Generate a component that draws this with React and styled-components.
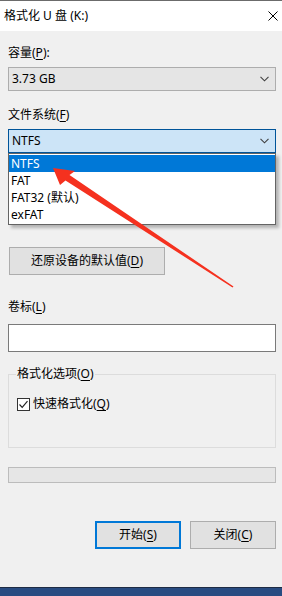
import React from "react";
import styled, { createGlobalStyle } from "styled-components";

const GlobalStyle = createGlobalStyle`
  html, body {
    margin: 0;
    padding: 0;
    background: #f0f0f0;
  }
  body {
    font-family: "Noto Sans", "Noto Sans CJK SC", sans-serif;
    font-size: 12px;
    color: #000;
  }
`;

const Window = styled.div`
  position: relative;
  width: 282px;
  height: 596px;
  display: flex;
  flex-direction: column;
  background: #f0f0f0;
  overflow: hidden;
`;

const TitleBar = styled.div`
  height: 30px;
  border-top: 1px solid #6b6b6b;
  background: #fff;
  display: flex;
  align-items: center;
  justify-content: space-between;
  padding: 0 4px 0 4px;
`;

const Title = styled.span`
  font-size: 12px;
  line-height: 16px;
`;

const CloseIcon = styled.svg`
  width: 10px;
  height: 10px;
`;

const Body = styled.div`
  flex: 1;
  display: flex;
  flex-direction: column;
  padding: 14px 6px 0 8px;
`;

const Label = styled.div`
  line-height: 16px;
  height: 16px;
  margin-top: ${({ $top }) => $top || 0}px;
  margin-bottom: ${({ $gap }) => $gap || 6}px;
`;

const Key = styled.u`
  text-underline-offset: 2px;
`;

const Field = styled.div`
  position: relative;
`;

const Combo = styled.div`
  height: 24px;
  box-sizing: border-box;
  border: 1px solid ${({ $open }) => ($open ? "#005499" : "#adadad")};
  background: ${({ $open }) => ($open ? "#cce4f7" : "#e5e5e5")};
  display: flex;
  align-items: center;
  justify-content: space-between;
  padding: 0 6px 0 3px;
  line-height: 16px;
`;

const Chevron = styled.svg`
  width: 9px;
  height: 6px;
`;

const DropList = styled.ul`
  position: absolute;
  left: 0;
  right: 0;
  top: 24px;
  margin: 0;
  padding: 1px 0;
  list-style: none;
  background: #fff;
  border: 1px solid #646464;
  box-sizing: border-box;
  box-shadow: 3px 3px 3px rgba(0, 0, 0, 0.25);
  z-index: 2;
`;

const DropItem = styled.li`
  height: 17px;
  line-height: 17px;
  padding-left: 2px;
  background: ${({ $active }) => ($active ? "#0078d7" : "transparent")};
  color: ${({ $active }) => ($active ? "#fff" : "#000")};
`;

const Button = styled.button`
  font: inherit;
  color: #000;
  height: 28px;
  width: ${({ $w }) => $w}px;
  box-sizing: border-box;
  background: #e1e1e1;
  border: ${({ $focus }) => ($focus ? "2px solid #0078d7" : "1px solid #adadad")};
  padding: 0;
  line-height: 16px;
`;

const ResetButton = styled(Button)`
  margin-top: 94px;
  margin-left: 1px;
`;

const TextBox = styled.div`
  height: 28px;
  box-sizing: border-box;
  background: #fff;
  border: 1px solid #7a7a7a;
`;

const Group = styled.fieldset`
  margin: 14px 0 0 0;
  padding: 14px 0 0 8px;
  border: 1px solid #dcdcdc;
  height: 82px;
  box-sizing: border-box;
  min-width: 0;
`;

const Legend = styled.legend`
  padding: 0 1px;
  margin-left: -1px;
  line-height: 16px;
`;

const CheckRow = styled.label`
  display: flex;
  align-items: center;
  gap: 3px;
  line-height: 16px;
`;

const CheckBox = styled.span`
  width: 13px;
  height: 13px;
  box-sizing: border-box;
  border: 1px solid #333;
  background: #fff;
  display: flex;
  align-items: center;
  justify-content: center;
`;

const Progress = styled.div`
  margin-top: 19px;
  height: 16px;
  box-sizing: border-box;
  background: #e6e6e6;
  border: 1px solid #bcbcbc;
`;

const ButtonRow = styled.div`
  margin-top: 38px;
  display: flex;
  justify-content: flex-end;
  gap: 9px;
`;

const Taskbar = styled.div`
  height: 8px;
  border-top: 1px solid #1e2c44;
  background: #284b81;
`;

const ArrowLayer = styled.svg`
  position: absolute;
  left: 0;
  top: 0;
  width: 282px;
  height: 596px;
  pointer-events: none;
  z-index: 5;
`;

const chevron = (
  <Chevron viewBox="0 0 9 6">
    <path d="M0.5 0.8 L4.5 4.8 L8.5 0.8" fill="none" stroke="#404040" strokeWidth="1.1" />
  </Chevron>
);

export default function App() {
  return (
    <Window>
      <GlobalStyle />
      <TitleBar>
        <Title>格式化 U 盘 (K:)</Title>
        <CloseIcon viewBox="0 0 10 10">
          <path d="M0.5 0.5 L9.5 9.5 M9.5 0.5 L0.5 9.5" stroke="#000" strokeWidth="1" />
        </CloseIcon>
      </TitleBar>

      <Body>
        <Label>
          容量(<Key>P</Key>):
        </Label>
        <Combo>
          <span>3.73 GB</span>
          {chevron}
        </Combo>

        <Label $top={16}>
          文件系统(<Key>F</Key>)
        </Label>
        <Field>
          <Combo $open>
            <span>NTFS</span>
            {chevron}
          </Combo>
          <DropList>
            <DropItem $active>NTFS</DropItem>
            <DropItem>FAT</DropItem>
            <DropItem>FAT32 (默认)</DropItem>
            <DropItem>exFAT</DropItem>
          </DropList>
        </Field>

        <ResetButton $w={156}>
          还原设备的默认值(<Key>D</Key>)
        </ResetButton>

        <Label $top={24} $gap={9}>
          卷标(<Key>L</Key>)
        </Label>
        <TextBox />

        <Group>
          <Legend>
            格式化选项(<Key>O</Key>)
          </Legend>
          <CheckRow>
            <CheckBox>
              <svg width="11" height="11" viewBox="0 0 11 11">
                <path d="M1.5 5.5 L4.2 8.3 L9.5 2.2" fill="none" stroke="#222" strokeWidth="1.2" />
              </svg>
            </CheckBox>
            <span>
              快速格式化(<Key>Q</Key>)
            </span>
          </CheckRow>
        </Group>

        <Progress />

        <ButtonRow>
          <Button $w={86} $focus>
            开始(<Key>S</Key>)
          </Button>
          <Button $w={86}>
            关闭(<Key>C</Key>)
          </Button>
        </ButtonRow>
      </Body>

      <Taskbar />

      <ArrowLayer viewBox="0 0 282 596">
        <polygon
          points="53,168 75,171 69.5,175 233.5,286.5 232.5,287.5 65.5,180.5 60,185"
          fill="#f5311f"
        />
      </ArrowLayer>
    </Window>
  );
}
